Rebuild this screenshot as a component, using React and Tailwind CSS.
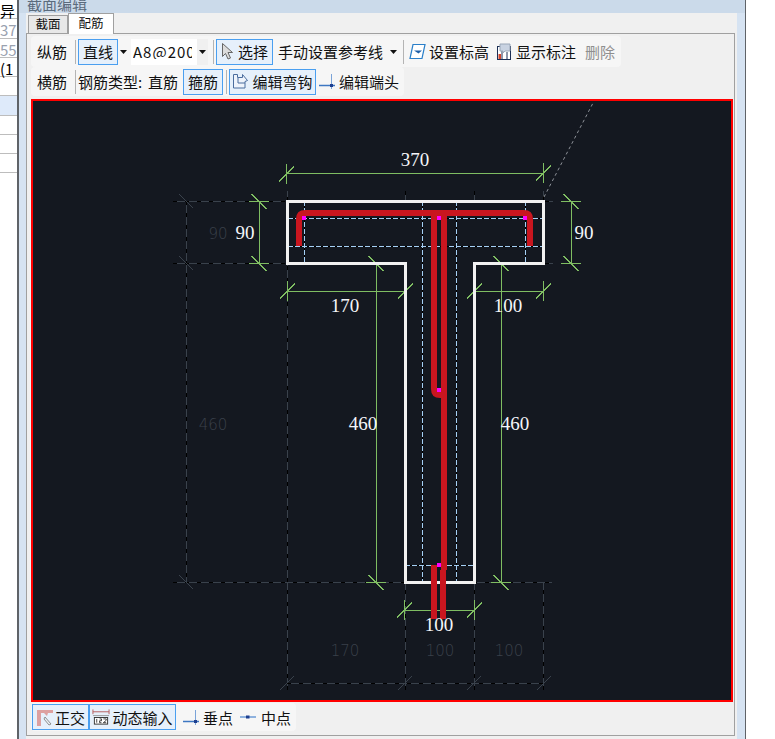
import React from 'react'

const FONT = '"Noto Sans CJK SC", "Noto Sans", sans-serif'

// tabel din stanga, taiat de fereastra
const sideRows = [
  { t: '异', c: 'text-black' },
  { t: '37', c: 'text-gray-400' },
  { t: '55', c: 'text-gray-400' },
  { t: '(1', c: 'text-black' },
  { t: '' },
  { t: '', bg: 'bg-[#deeafa]' },
  { t: '' },
  { t: '' },
  { t: '' },
]

function Arrow({ className = '' }) {
  return (
    <svg width="7" height="4" viewBox="0 0 7 4" className={className}>
      <path d="M0 0h7L3.500 4z" fill="#111" />
    </svg>
  )
}

function Sep({ className = '' }) {
  return <div className={`w-px h-[24px] bg-[#b4b4b4] ${className}`} />
}

function Btn({ children, className = '' }) {
  return (
    <div className={`flex items-center justify-center border border-[#4a9ff0] bg-[#e6f0fb] ${className}`}>
      {children}
    </div>
  )
}

function CursorIcon() {
  return (
    <svg width="12" height="17" viewBox="0 0 12 17" className="shrink-0">
      <path d="M1.500 0.500v13l3-3 2.500 5.500 2.500-1-2.500-5.500h4.500z" fill="#dcdcdc" stroke="#666" />
    </svg>
  )
}

function HookIcon() {
  return (
    <svg width="17" height="17" viewBox="0 0 17 17" className="shrink-0">
      <path d="M1.500 1.500h4v3h5v-3l5 6-2.500 1v6.500h-11.500z" fill="#eef3fb" stroke="#4b6d9e" />
      <path d="M6 5v5h7" fill="none" stroke="#4b6d9e" />
    </svg>
  )
}

function EndIcon() {
  return (
    <svg width="17" height="17" viewBox="0 0 17 17" className="shrink-0">
      <path d="M0 12.500h16" stroke="#3d77c2" strokeWidth="1.500" />
      <path d="M12.500 1v15" stroke="#7aa3d8" />
      <rect x="11" y="11" width="3" height="3" fill="#1e3f8f" />
    </svg>
  )
}

function MidIcon() {
  return (
    <svg width="16" height="8" viewBox="0 0 16 8" className="shrink-0">
      <path d="M0 4h16" stroke="#6d9bd6" strokeWidth="1.500" />
      <rect x="6" y="2.500" width="3.500" height="3" fill="#1e3f8f" />
    </svg>
  )
}

function ElevationIcon() {
  return (
    <svg width="17" height="17" viewBox="0 0 17 17" className="shrink-0">
      <path d="M4 1.500h12l-3 14h-12z" fill="#fff" stroke="#2a7fc9" strokeWidth="1.200" />
      <path d="M5 7.500h8l-3.500 3z" fill="#1e5fa8" />
    </svg>
  )
}

function NoteIcon() {
  return (
    <svg width="15" height="17" viewBox="0 0 15 17" className="shrink-0">
      <rect x="0.500" y="3.500" width="13" height="13" fill="#fff" stroke="#1c2f55" />
      <path d="M5 4v12M10 9v7" stroke="#1c2f55" />
      <rect x="1.500" y="11" width="2.500" height="5" fill="#d4452c" />
      <path d="M3 1h10v7h-5l-2 2v-2h-3z" fill="#c9d3e2" stroke="#9aa7b8" />
    </svg>
  )
}

function OrthoIcon() {
  return (
    <svg width="17" height="19" viewBox="0 0 17 19" className="shrink-0">
      <path d="M1 2h16v3h-5l-1 3-3-3h-3v13h-4z" fill="#dda0a0" />
      <path d="M9 9l6 7-2 1-5-6z" fill="#e8eef2" stroke="#777" strokeWidth="0.800" />
    </svg>
  )
}

function InputIcon() {
  return (
    <svg width="18" height="18" viewBox="0 0 19 18" className="shrink-0">
      <path d="M1 1v5M18 1v5M1 3.500h17" stroke="#b65c5c" />
      <rect x="2.500" y="9.500" width="14" height="7" fill="#fff" stroke="#333" />
      <path d="M5 11v4M8 11h2v2h-2v2h2M12 11h3v1.500l-3 2.500h3" stroke="#111" strokeWidth="0.800" fill="none" />
      <path d="M1 7.500h17" stroke="#999" />
    </svg>
  )
}

// ticuri de cota: linie dreapta plus diagonala
function Tick({ x, y, dir = 'h', color = '#7fbd62', len = 10 }) {
  const line = dir === 'h'
    ? <path d={`M${x - len} ${y}H${x + len}`} />
    : <path d={`M${x} ${y - len}V${y + len}`} />
  return (
    <g stroke={color} strokeWidth="1" fill="none" shapeRendering="crispEdges">
      {line}
      <path d={dir === 'h'
        ? `M${x - 7.500} ${y - 7.500}L${x + 7.500} ${y + 7.500}`
        : `M${x - 7.500} ${y + 7.500}L${x + 7.500} ${y - 7.500}`} />
    </g>
  )
}

function DarkDash({ d }) {
  return (
    <g fill="none" shapeRendering="crispEdges">
      <path d={d} stroke="#3a424c" strokeWidth="1" />
      <path d={d} stroke="#000" strokeWidth="1" strokeDasharray="4 8" />
    </g>
  )
}

function BlueDash({ d }) {
  return (
    <g fill="none" shapeRendering="crispEdges">
      <path d={d} stroke="#000" strokeWidth="1" />
      <path d={d} stroke="#a6d0f5" strokeWidth="1" strokeDasharray="5 2" />
    </g>
  )
}

function Dim({ x, y, children, dark }) {
  return (
    <text
      x={x}
      y={y}
      textAnchor="middle"
      fontSize="19"
      fontFamily={dark ? '"DejaVu Sans", sans-serif' : '"Liberation Serif", serif'}
      fontWeight={dark ? 200 : 400}
      fill={dark ? '#3a404a' : '#f4f6fa'}
      style={dark ? { fontSize: 15 } : undefined}
    >
      {children}
    </text>
  )
}

// desenul sectiunii T, in coordonatele paginii
function Drawing() {
  return (
    <svg width="698" height="599" viewBox="33 101 698 599" className="block">
      {/* linii auxiliare inchise */}
      <DarkDash d="M173 201.500H285M173 263.500H285M173 582.500H552M287.500 690V263M287.500 201V191M405.500 690V582M474.500 690V582M543.500 690V582M287 683.500H544" />
      <DarkDash d="M186.500 201V582M405.500 191V201M474.500 191V201M543.500 200V191M545 201.500H553M545 263.500H553" />
      <g stroke="#3a424c" fill="none" shapeRendering="crispEdges">
        <path d="M179 194l14 14M179 256l14 14M179 575l14 14" />
        <path d="M280 690l14-14M398 690l14-14M467 690l14-14M537 690l14-14" />
      </g>
      <path d="M544 197L593 103" stroke="#8d9198" strokeDasharray="3 3" fill="none" />

      {/* linii armatura */}
      <BlueDash d="M288 218.500H542M288 246.500H542M405 565.500H474" />
      <BlueDash d="M304.500 201V263M525.500 201V263M422.500 201V582M456.500 201V582" />

      {/* cote verzi */}
      <g stroke="#7fbd62" fill="none" shapeRendering="crispEdges">
        <path d="M286 173.500H543M259.500 201V263M571.500 201V263M286 291.500H405M474 291.500H543M376.500 263V582M501.500 263V582M404 610.500H474" />
      </g>
      <Tick x={286.5} y={174} dir="v" />
      <Tick x={543.5} y={173} dir="v" />
      <Tick x={259} y={201.5} />
      <Tick x={259} y={263.5} />
      <Tick x={571} y={201.5} />
      <Tick x={571} y={263.5} />
      <Tick x={287.5} y={291} dir="v" />
      <Tick x={405.5} y={291} dir="v" />
      <Tick x={474.5} y={291} dir="v" />
      <Tick x={543.5} y={291} dir="v" />
      <Tick x={376} y={263.5} />
      <Tick x={376} y={582.5} />
      <Tick x={501} y={263.5} />
      <Tick x={501} y={582.5} />
      <Tick x={404.5} y={610} dir="v" />
      <Tick x={474.5} y={610} dir="v" />

      {/* conturul T */}
      <path
        d="M287.500 201.500H543.500V263.500H474.500V582.500H405.500V263.500H287.500Z"
        fill="none"
        stroke="#f2f2f2"
        strokeWidth="3"
        shapeRendering="crispEdges"
      />

      {/* bare rosii */}
      <g stroke="#c9161f" strokeWidth="6" fill="none">
        <path d="M299 246V219Q299 213 305 213H524Q530 213 530 219V246" />
        <path d="M434 213V389Q434 395 440 395H444" />
        <path d="M444 213V570" />
        <path d="M434 565V619" />
        <path d="M443 570V619" />
      </g>

      {/* puncte magenta */}
      <g fill="#ff00ff">
        <rect x="302" y="216" width="4" height="4" />
        <rect x="437" y="216" width="4" height="4" />
        <rect x="523" y="216" width="4" height="4" />
        <rect x="437" y="388" width="4" height="4" />
        <rect x="437" y="563" width="4" height="4" />
      </g>

      <Dim x={415} y={166}>370</Dim>
      <Dim x={245} y={239}>90</Dim>
      <Dim x={584} y={239}>90</Dim>
      <Dim x={345} y={312}>170</Dim>
      <Dim x={508} y={312}>100</Dim>
      <Dim x={363} y={430}>460</Dim>
      <Dim x={515} y={430}>460</Dim>
      <Dim x={439} y={631}>100</Dim>

      <Dim x={218} y={239} dark>90</Dim>
      <Dim x={213} y={430} dark>460</Dim>
      <Dim x={345} y={656} dark>170</Dim>
      <Dim x={440} y={656} dark>100</Dim>
      <Dim x={509} y={656} dark>100</Dim>
    </svg>
  )
}

export default function App() {
  return (
    <div
      className="flex w-[775px] h-[739px] overflow-hidden bg-white text-[15px] text-[#111] leading-none"
      style={{ fontFamily: FONT }}
    >
      {/* tabel lateral */}
      <div className="w-[17px] shrink-0 overflow-hidden text-[15px]">
        {sideRows.map((r, i) => (
          <div
            key={i}
            className={`h-[19.250px] pt-[3px] border-b border-[#bdbdbd] whitespace-nowrap ${r.c || ''} ${r.bg || ''}`}
          >
            {r.t}
          </div>
        ))}
      </div>

      {/* fereastra */}
      <div className="w-[729px] shrink-0 border-l-2 border-r border-x-[#5f6368] bg-[#d6e3f2] flex flex-col">
        <div className="h-[13px] overflow-hidden bg-[#cbdaea] pl-[8px]">
          <div className="text-[15px] text-[#5b6b7d] -mt-[4px]">截面编辑</div>
        </div>

        <div className="ml-[7px] mr-[8px] flex-1 bg-[#f0f0f0] flex flex-col min-h-0">
          {/* taburi */}
          <div className="h-[20px] flex items-end pl-[2px] text-[12.500px] relative z-10">
            <div className="w-[40px] h-[18px] border border-[#a0a0a0] border-b-0 bg-[#e8e8e8] flex items-center justify-center">截面</div>
            <div className="w-[46px] h-[21px] -mb-[1px] border border-[#a0a0a0] border-b-0 bg-white flex items-start pt-[3px] justify-center">配筋</div>
          </div>

          <div className="w-[709px] h-[703px] border border-[#a0a0a0] bg-[#f0f0f0] px-[4px] flex flex-col">
            {/* rand 1 */}
            <div className="h-[31px] mt-[2px] w-[590px] bg-[#f6f6f6] rounded-sm flex items-center pl-[6px] whitespace-nowrap">
              <span className="w-[30px]">纵筋</span>
              <Sep className="ml-[8px]" />
              <Btn className="w-[40px] h-[26px] ml-[2px]">直线</Btn>
              <Arrow className="ml-[2px]" />
              <div className="ml-[4px] w-[77px] h-[26px] bg-white flex items-center pl-[2px] overflow-hidden">
                <span className="w-[59px] mr-[5px] overflow-hidden tracking-[1px] shrink-0">A8@200</span>
                <span className="w-[11px] h-full bg-[#f0f0f0] flex items-center justify-center shrink-0">
                  <Arrow />
                </span>
              </div>
              <Sep className="ml-[5px]" />
              <Btn className="w-[57px] h-[26px] ml-[2px] gap-[5px]">
                <CursorIcon />
                选择
              </Btn>
              <span className="ml-[5px] w-[105px]">手动设置参考线</span>
              <Arrow className="ml-[7px]" />
              <Sep className="ml-[6px]" />
              <span className="ml-[5px]"><ElevationIcon /></span>
              <span className="ml-[3px] w-[60px]">设置标高</span>
              <span className="ml-[8px]"><NoteIcon /></span>
              <span className="ml-[4px] w-[60px]">显示标注</span>
              <span className="ml-[9px] text-[#8f8f8f]">删除</span>
            </div>

            {/* rand 2 */}
            <div className="h-[29px] w-[373px] bg-[#f6f6f6] rounded-sm flex items-center pl-[6px] whitespace-nowrap">
              <span className="w-[30px]">横筋</span>
              <Sep className="ml-[8px]" />
              <span className="ml-[2px] w-[64px]">钢筋类型:</span>
              <span className="ml-[6px] w-[30px]">直筋</span>
              <Btn className="ml-[5px] w-[40px] h-[26px]">箍筋</Btn>
              <Sep className="ml-[3px]" />
              <Btn className="ml-[2px] w-[87px] h-[26px] gap-[3px]">
                <HookIcon />
                编辑弯钩
              </Btn>
              <span className="ml-[3px]"><EndIcon /></span>
              <span className="ml-[3px]">编辑端头</span>
            </div>

            {/* zona de desen */}
            <div className="border-2 border-[#ff0000] bg-[#141820] w-[702px] h-[603px] mt-[3px] shrink-0">
              <Drawing />
            </div>

            {/* bara de jos */}
            <div className="h-[28px] mt-[1px] w-[265px] bg-[#f6f6f6] rounded-sm flex items-center pl-[1px] whitespace-nowrap">
              <Btn className="w-[57px] h-[26px] gap-[2px]">
                <OrthoIcon />
                正交
              </Btn>
              <Btn className="w-[87px] h-[26px] gap-[2px]">
                <InputIcon />
                动态输入
              </Btn>
              <span className="ml-[7px]"><EndIcon /></span>
              <span className="ml-[3px] w-[30px]">垂点</span>
              <span className="ml-[7px]"><MidIcon /></span>
              <span className="ml-[5px]">中点</span>
            </div>
          </div>
        </div>
      </div>
    </div>
  )
}
